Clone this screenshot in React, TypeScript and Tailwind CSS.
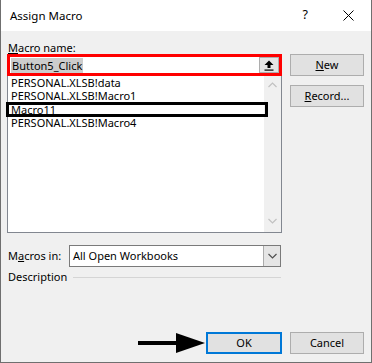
const items = ["PERSONAL.XLSB!data", "PERSONAL.XLSB!Macro1", "Macro11", "PERSONAL.XLSB!Macro4"];

const Chevron = ({ up, color }: { up?: boolean; color: string }) => (
    <svg width="9" height="6" viewBox="0 0 9 6">
        <path d={up ? "M0.5 5 L4.5 1 L8.5 5" : "M0.5 1 L4.5 5 L8.5 1"} fill="none" stroke={color} strokeWidth="1.2" />
    </svg>
);

const App = () => {
    return (
        <div className="w-[372px] h-[363px] flex flex-col bg-[#f0f0f0] border-x border-b border-[#6f6f6f] font-['Noto_Sans',sans-serif] text-[11px] text-black">
            {/* title bar */}
            <div className="h-[31px] bg-white flex items-center pl-[9px] shrink-0">
                <span className="text-[11.5px]">Assign Macro</span>
                <span className="ml-auto mr-[35px] text-[12.5px]">?</span>
                <svg width="11" height="11" viewBox="0 0 11 11" className="mr-[17px]">
                    <path d="M0.5 0.5 L10.5 10.5 M10.5 0.5 L0.5 10.5" stroke="#000" strokeWidth="1" />
                </svg>
            </div>

            <div className="flex pl-[6px]">
                {/* left column */}
                <div className="w-[275px] flex flex-col">
                    <div className="mt-[10px] h-[13px] leading-[13px] pl-[1px]">
                        <u className="underline-offset-1">M</u>acro name:
                    </div>
                    <div className="h-[22px] border-[3px] border-[#ff0000] bg-white flex items-center pl-[1px]">
                        <span className="bg-[#cccccc] leading-[15px] px-[1px]">Button5_Click</span>
                        <div className="ml-auto w-[20px] h-[16px] bg-[#e5e5e5] border border-[#adadad] flex items-center justify-center">
                            <svg width="10" height="11" viewBox="0 0 10 11">
                                <path d="M5 0.5 L9.5 5 L6.5 5 L6.5 8 L3.5 8 L3.5 5 L0.5 5 Z" fill="#000" />
                                <rect x="0.5" y="9.5" width="9" height="1.2" fill="#000" />
                            </svg>
                        </div>
                    </div>
                    <div className="h-[157px] bg-white border-x border-b border-[#828790] flex">
                        <div className="flex-1 flex flex-col">
                            {items.map((it) => (
                                <div key={it} className="relative h-[13.3px] leading-[13.3px] pl-[3px] whitespace-nowrap">
                                    {it}
                                    {it === "Macro11" && (
                                        <span className="absolute left-[-2px] right-[-4px] top-[-1px] bottom-[-1px] border-[3px] border-black" />
                                    )}
                                </div>
                            ))}
                        </div>
                        <div className="w-[17px] bg-[#f0f0f0] flex flex-col items-center justify-between pt-[6px] pb-[8px]">
                            <Chevron up color="#c1c1c1" />
                            <Chevron color="#c1c1c1" />
                        </div>
                    </div>
                    <div className="mt-[12px] flex items-center">
                        <div className="w-[62px] pl-[1px]">
                            M<u className="underline-offset-1">a</u>cros in:
                        </div>
                        <div className="w-[212px] h-[22px] bg-white border border-[#7a7a7a] flex items-center">
                            <span className="pl-[3px]">All Open Workbooks</span>
                            <div className="ml-auto w-[17px] h-full bg-[#e5e5e5] border-l border-[#acacac] flex items-center justify-center">
                                <Chevron color="#505050" />
                            </div>
                        </div>
                    </div>
                    <div className="mt-[2px] flex items-center h-[16px]">
                        <span className="pl-[1px]">Description</span>
                        <div className="flex-1 ml-[6px] mr-[1px] h-px bg-[#d5d5d5]" />
                    </div>
                </div>

                {/* right column */}
                <div className="ml-[8px] mt-[23px] flex flex-col gap-[9px]">
                    <button className="w-[74px] h-[22px] bg-[#e1e1e1] border border-[#adadad]">
                        <u className="underline-offset-1">N</u>ew
                    </button>
                    <button className="w-[74px] h-[22px] bg-[#e1e1e1] border border-[#adadad]">
                        <u className="underline-offset-1">R</u>ecord...
                    </button>
                </div>
            </div>

            <div className="flex-1" />

            {/* bottom buttons */}
            <div className="flex items-center justify-end pr-[7px] pb-[8px]">
                <svg width="68" height="21" viewBox="0 0 68 21">
                    <rect x="0" y="8" width="40" height="4" fill="#000" />
                    <path d="M38 0 L67 10 L38 20 Z" fill="#000" />
                </svg>
                <button className="w-[76px] h-[22px] bg-[#e1e1e1] border-2 border-[#0078d7]">OK</button>
                <button className="ml-[8px] w-[74px] h-[22px] bg-[#e1e1e1] border border-[#adadad]">Cancel</button>
            </div>
        </div>
    );
};

export default App;
